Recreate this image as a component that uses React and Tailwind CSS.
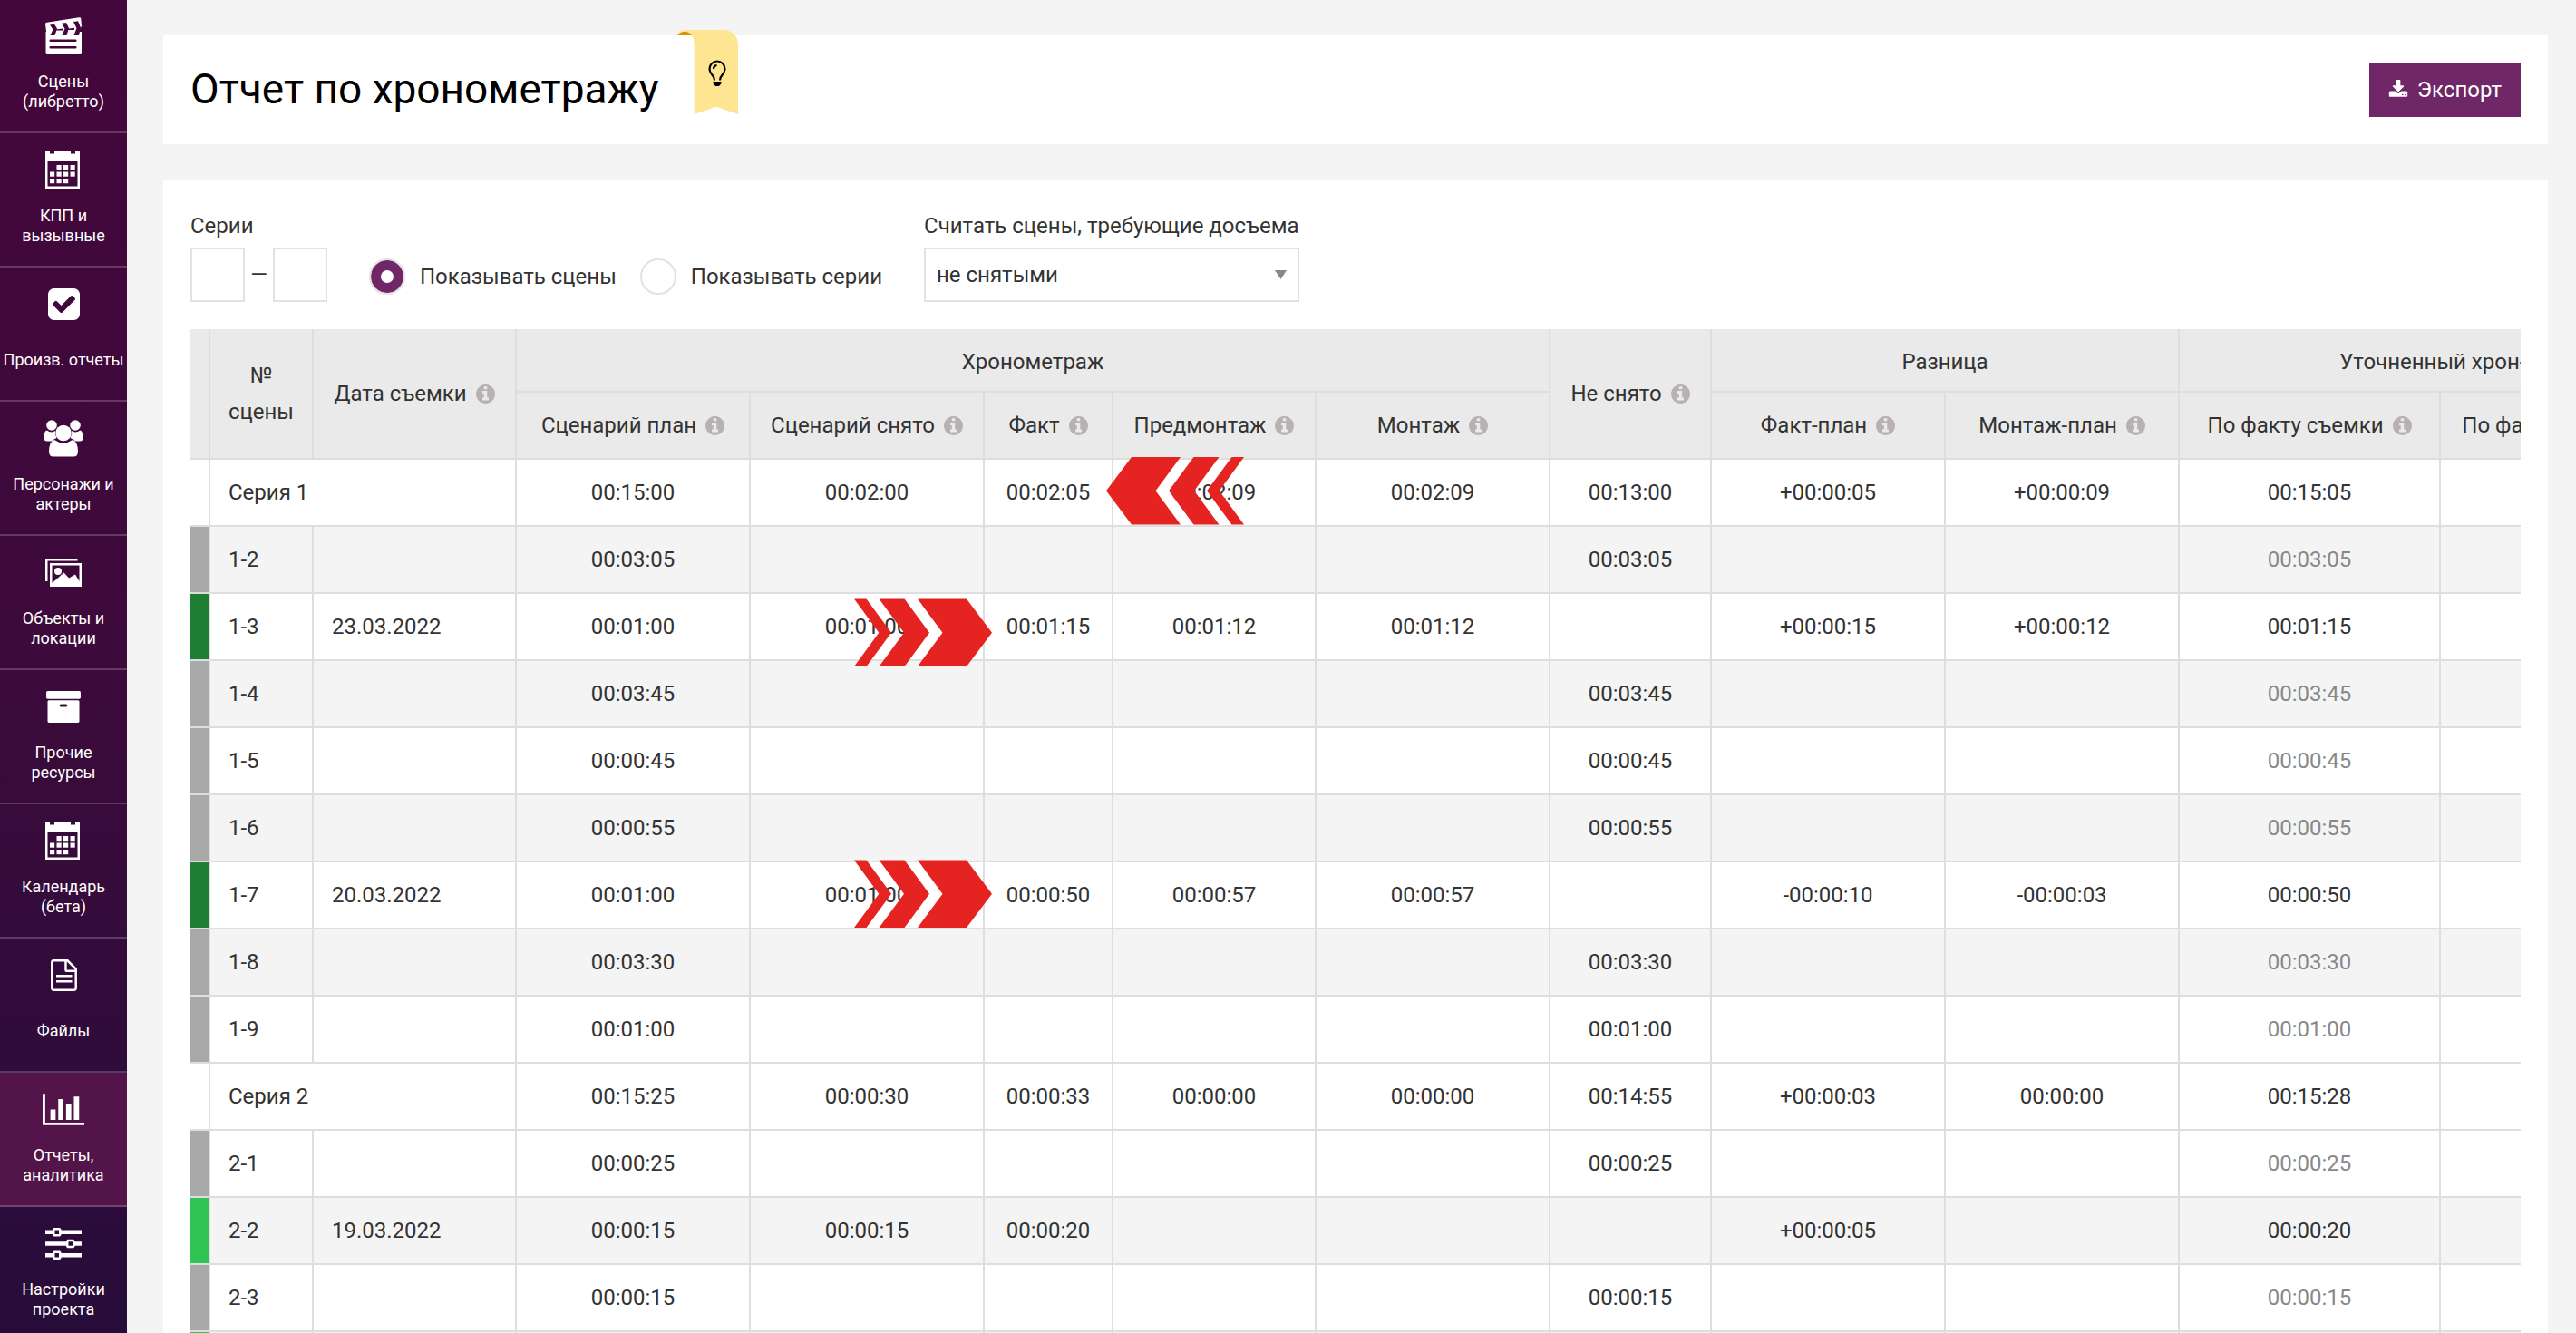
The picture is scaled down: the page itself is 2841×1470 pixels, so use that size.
import React from "react";

const P = "text-white fill-current";

function Clapper() {
  return (
    <svg className={P} width="40" height="40" viewBox="0 0 40 40" aria-hidden="true">
      <path d="M0.500 16H40V38.500Q40 40 38.500 40H2Q0.500 40 0.500 38.500Z" />
      <path d="M0 7.500Q0 6 1.600 5.700L37 0.200Q39 0 39.300 1.600L40 10L37 14.500L38.500 20H3L1 15.500Z" />
      <g fill="#42063a">
        <path d="M5 8.500L10 7.800L13 12.500L10.500 20H5.500L8.500 13.500Z" />
        <path d="M18 6.800L23 6L26 12L23.500 20H18.500L21.500 12.500Z" />
        <path d="M31 5L36 4.300L39 11.500L37 20H31.500L34.500 12Z" />
        <path d="M11 13.500L19 12.600V14.500H11ZM24 12.800L32 11.800V14H24Z" />
        <rect x="4.500" y="24.500" width="30" height="2.600" rx="1" />
        <rect x="4.500" y="32" width="30" height="2.600" rx="1" />
      </g>
    </svg>
  );
}

function Calendar() {
  const cells = [[12.500, 15], [20, 15], [27.500, 15], [5, 22.500], [12.500, 22.500], [20, 22.500], [27.500, 22.500], [5, 30], [12.500, 30], [20, 30]];
  return (
    <svg className={P} width="40" height="41" viewBox="0 0 40 41" aria-hidden="true">
      <path fillRule="evenodd" d="M0 0H5V2.500H10V0H28V2.500H33V0H38V41H0ZM2.500 10.500V38.500H35.500V10.500Z" />
      {cells.map(([x, y]) => (
        <rect key={x + "-" + y} x={x} y={y} width="5.200" height="5.200" />
      ))}
    </svg>
  );
}

function CheckSquare() {
  return (
    <svg className={P} width="35" height="35" viewBox="128 128 1536 1536" aria-hidden="true">
      <path d="M813 1299l614-614q19-19 19-45t-19-45l-102-102q-19-19-45-19t-45 19l-467 467-211-211q-19-19-45-19t-45 19l-102 102q-19 19-19 45t19 45l358 358q19 19 45 19t45-19zm851-883v960q0 119-84.500 203.500t-203.500 84.500h-960q-119 0-203.500-84.500t-84.500-203.500v-960q0-119 84.500-203.500t203.500-84.500h960q119 0 203.500 84.500t84.500 203.500z" />
    </svg>
  );
}

function People() {
  return (
    <svg className={P} width="44" height="41" viewBox="0 0 44 41" aria-hidden="true">
      <circle cx="9" cy="6" r="5.800" />
      <circle cx="35" cy="6" r="5.800" />
      <path d="M3.500 11.500Q9 15 13 12Q12 16 14.500 20Q10 22 9 23.500H4Q0.300 23.500 0.300 19Q0.300 13 3.500 11.500Z" />
      <path d="M40.500 11.500Q35 15 31 12Q32 16 29.500 20Q34 22 35 23.500H40Q43.700 23.500 43.700 19Q43.700 13 40.500 11.500Z" />
      <circle cx="22" cy="14.500" r="8.800" />
      <path d="M12 22Q22 29 32 22Q38 24 38 35Q38 40.500 33 40.500H11Q6 40.500 6 35Q6 24 12 22Z" />
    </svg>
  );
}

function Images() {
  return (
    <svg className={P} width="40" height="31" viewBox="0 0 40 31" aria-hidden="true">
      <path d="M0 0H35.500V2.500H2.500V25H0Z" />
      <path fillRule="evenodd" d="M5 5H40V31H5ZM7.500 7.500V27L20.500 15.500L26 21.500L33 17.500L37.500 25V7.500Z" />
      <circle cx="14" cy="14" r="4" />
    </svg>
  );
}

function Archive() {
  return (
    <svg className={P} width="38" height="35" viewBox="64 128 1664 1536" aria-hidden="true">
      <path d="M1088 832q0-26-19-45t-45-19h-256q-26 0-45 19t-19 45 19 45 45 19h256q26 0 45-19t19-45zm576-192v960q0 26-19 45t-45 19h-1408q-26 0-45-19t-19-45v-960q0-26 19-45t45-19h1408q26 0 45 19t19 45zm64-448v256q0 26-19 45t-45 19h-1536q-26 0-45-19t-19-45v-256q0-26 19-45t45-19h1536q26 0 45 19t19 45z" />
    </svg>
  );
}

function FileText() {
  return (
    <svg className="text-white" width="29" height="35" viewBox="0 0 29 35" fill="none" stroke="currentColor" strokeWidth="2.500" aria-hidden="true">
      <path d="M3.500 1.300H18.500L27.700 10.500V31.500Q27.700 33.700 25.500 33.700H3.500Q1.300 33.700 1.300 31.500V3.500Q1.300 1.300 3.500 1.300Z" />
      <path d="M16.500 2V11.500Q16.500 12.800 18 12.800H27" />
      <path d="M6 18.200H23.500M6 24.200H23.500" />
    </svg>
  );
}

function BarChart() {
  return (
    <svg className={P} width="46" height="35" viewBox="0 128 2048 1536" aria-hidden="true">
      <path d="M640 896v512h-256v-512h256zm384-512v1024h-256v-1024h256zm1024 1152v128h-2048v-1536h128v1408h1920zm-640-896v768h-256v-768h256zm384-384v1152h-256v-1152h256z" />
    </svg>
  );
}

function Sliders() {
  return (
    <svg className={P} width="40" height="35" viewBox="0 0 40 35" aria-hidden="true">
      <path fillRule="evenodd" d="M0 2.500H8V1.500L9.500 0H16L17.500 1.500V2.500H40V7H17.500V8L16 9.500H9.500L8 8V7H0ZM10.500 2.500V7H15V2.500Z" />
      <path fillRule="evenodd" d="M0 15.200H23V14.200L24.500 12.700H31L32.500 14.200V15.200H40V19.700H32.500V20.700L31 22.200H24.500L23 20.700V19.700H0ZM25.500 15.200V19.700H30V15.200Z" />
      <path fillRule="evenodd" d="M0 28H8V27L9.500 25.500H16L17.500 27V28H40V32.500H17.500V33.500L16 35H9.500L8 33.500V32.500H0ZM10.500 28V32.500H15V28Z" />
    </svg>
  );
}

function Info() {
  return (
    <svg className="ml-2.5 inline-block shrink-0 fill-[#b8b1b2]" width="21" height="21" viewBox="128 128 1536 1536" aria-hidden="true">
      <path d="M1152 1376v-160q0-14-9-23t-23-9h-96v-512q0-14-9-23t-23-9h-320q-14 0-23 9t-9 23v160q0 14 9 23t23 9h96v320h-96q-14 0-23 9t-9 23v160q0 14 9 23t23 9h448q14 0 23-9t9-23zm-128-896v-160q0-14-9-23t-23-9h-192q-14 0-23 9t-9 23v160q0 14 9 23t23 9h192q14 0 23-9t9-23zm640 416q0 209-103 385.500t-279.500 279.500-385.500 103-385.500-103-279.500-279.500-103-385.500 103-385.500 279.500-279.500 385.500-103 385.500 103 279.500 279.500 103 385.500z" />
    </svg>
  );
}

function Download() {
  return (
    <svg className="fill-white" width="22" height="22" viewBox="0 0 1792 1792" aria-hidden="true">
      <path d="M1344 1344q0-26-19-45t-45-19-45 19-19 45 19 45 45 19 45-19 19-45zm256 0q0-26-19-45t-45-19-45 19-19 45 19 45 45 19 45-19 19-45zm128-224v320q0 40-28 68t-68 28h-1472q-40 0-68-28t-28-68v-320q0-40 28-68t68-28h465l135 136q58 56 136 56t136-56l136-136h464q40 0 68 28t28 68zm-325-569q17 41-14 70l-448 448q-18 19-45 19t-45-19l-448-448q-31-29-14-70 17-39 59-39h256v-448q0-26 19-45t45-19h256q26 0 45 19t19 45v448h256q42 0 59 39z" />
    </svg>
  );
}

function Arrow({ className }) {
  return (
    <svg className={className} width="152" height="75" viewBox="0 0 152 75" fill="#e52421" aria-hidden="true">
      <path d="M0 37.300L28 0H82L54.500 37.300L82 74.500H28Z" />
      <path d="M69 37.300L96.500 0H124.500L97 37.300L124.500 74.500H96.500Z" />
      <path d="M111 37.300L138.500 0H152L124.700 37.300L152 74.500H138.500Z" />
    </svg>
  );
}

function Ribbon() {
  return (
    <svg width="67" height="95" viewBox="0 0 67 95" aria-hidden="true">
      <path d="M0 6Q3 1.500 9 1.500Q15 1.500 16.500 6Z" fill="#d8940b" />
      <path d="M0 6Q2 0 9 0H51Q67 1 67 18V93L43 84.700L18.700 93V16Q18 3 9 1.700Q3 1.500 0 6Z" fill="#fee592" />
      <g fill="none" stroke="#000" strokeWidth="2.200">
        <path d="M41 55.500Q41 52.500 38 49Q35.500 46 35.500 43A8.500 8.500 0 0 1 52.500 43Q52.500 46 50 49Q47 52.500 47 55.500" />
        <path d="M40 43Q40 39.500 43.500 39" />
      </g>
      <path d="M39.500 57H48.500V59L46 62H42L39.500 59Z" />
    </svg>
  );
}

const nav = [
  [["Сцены", "(либретто)"], Clapper],
  [["КПП и", "вызывные"], Calendar],
  [["Произв. отчеты"], CheckSquare],
  [["Персонажи и", "актеры"], People],
  [["Объекты и", "локации"], Images],
  [["Прочие", "ресурсы"], Archive],
  [["Календарь", "(бета)"], Calendar],
  [["Файлы"], FileText],
  [["Отчеты,", "аналитика"], BarChart],
  [["Настройки", "проекта"], Sliders],
];

const GRAY = "bg-[#a9a9a9]";
const GREEN = "bg-[#1e7e34]";
const LIME = "bg-[#30c552]";

// id, status bar, striped, date, script plan, script shot, fact, pre-edit, edit, left, fact-plan, edit-plan, refined, refined is an estimate
const rows = [
  ["Серия 1", null, false, null, "00:15:00", "00:02:00", "00:02:05", "00:02:09", "00:02:09", "00:13:00", "+00:00:05", "+00:00:09", "00:15:05", false],
  ["1-2", GRAY, true, "", "00:03:05", "", "", "", "", "00:03:05", "", "", "00:03:05", true],
  ["1-3", GREEN, false, "23.03.2022", "00:01:00", "00:01:00", "00:01:15", "00:01:12", "00:01:12", "", "+00:00:15", "+00:00:12", "00:01:15", false],
  ["1-4", GRAY, true, "", "00:03:45", "", "", "", "", "00:03:45", "", "", "00:03:45", true],
  ["1-5", GRAY, false, "", "00:00:45", "", "", "", "", "00:00:45", "", "", "00:00:45", true],
  ["1-6", GRAY, true, "", "00:00:55", "", "", "", "", "00:00:55", "", "", "00:00:55", true],
  ["1-7", GREEN, false, "20.03.2022", "00:01:00", "00:01:00", "00:00:50", "00:00:57", "00:00:57", "", "-00:00:10", "-00:00:03", "00:00:50", false],
  ["1-8", GRAY, true, "", "00:03:30", "", "", "", "", "00:03:30", "", "", "00:03:30", true],
  ["1-9", GRAY, false, "", "00:01:00", "", "", "", "", "00:01:00", "", "", "00:01:00", true],
  ["Серия 2", null, false, null, "00:15:25", "00:00:30", "00:00:33", "00:00:00", "00:00:00", "00:14:55", "+00:00:03", "00:00:00", "00:15:28", false],
  ["2-1", GRAY, false, "", "00:00:25", "", "", "", "", "00:00:25", "", "", "00:00:25", true],
  ["2-2", LIME, true, "19.03.2022", "00:00:15", "00:00:15", "00:00:20", "", "", "", "+00:00:05", "", "00:00:20", false],
  ["2-3", GRAY, false, "", "00:00:15", "", "", "", "", "00:00:15", "", "", "00:00:15", true],
  ["", LIME, true, "", "", "", "", "", "", "", "", "", "", false],
];

const TH = "border-r-2 border-b-2 border-[#dedede] p-0 text-center font-normal whitespace-nowrap";
const GROUP = "border-r-2 border-b-2 border-[#dedede] px-0 pt-1 pb-0 text-center font-normal whitespace-nowrap";
const TD = "border-r-2 border-b-2 border-[#dedede] p-0 text-center";
const RADIO =
  "h-10 w-10 appearance-none rounded-full border-2 border-[#e2e2e2] bg-white checked:shadow-[inset_0_0_0_11px_#702767]";

const arrows = {
  "1-3": "pointer-events-none absolute top-[5px] left-[114px] z-10 rotate-180",
  "1-7": "pointer-events-none absolute -top-[3px] left-[114px] z-10 rotate-180",
  "Серия 1": "pointer-events-none absolute -top-[3px] -left-2 z-10",
};
const arrowColumn = { "1-3": 1, "1-7": 1, "Серия 1": 3 };

function Head({ children, ...rest }) {
  return (
    <th className={TH} {...rest}>
      <span className="inline-flex items-center px-5">
        {children}
        <Info />
      </span>
    </th>
  );
}

function Row({ row }) {
  const [id, bar, striped, date, ...rest] = row;
  const estimate = rest[rest.length - 1];
  const values = rest.slice(0, -1);
  return (
    <tr className={striped ? "h-[74px] bg-[#f4f4f4]" : "h-[74px] bg-white"}>
      <td className={`border-r-2 border-b-2 border-[#dedede] bg-clip-padding p-0 ${bar || ""}`} />
      <td className="border-r-2 border-b-2 border-[#dedede] py-0 pr-0 pl-5 text-left whitespace-nowrap" colSpan={date === null ? 2 : 1}>
        {id}
      </td>
      {date !== null && <td className="border-r-2 border-b-2 border-[#dedede] py-0 pr-0 pl-5 text-left">{date}</td>}
      {values.map((v, i) => (
        <td key={i} className={`${TD} relative ${i === 8 && estimate ? "text-[#888888]" : ""}`}>
          {v}
          {arrowColumn[id] === i && <Arrow className={arrows[id]} />}
        </td>
      ))}
      <td className={TD} />
    </tr>
  );
}

export default function App() {
  return (
    <div className="flex h-screen overflow-hidden bg-[#f4f4f4] font-['Roboto',sans-serif] text-2xl text-[#333333]">
      <nav className="w-[140px] shrink-0 overflow-hidden bg-linear-to-b from-[#44063b] via-[#3c0a3b] to-[#270c3a]">
        <ul className="-mt-px">
          {nav.map(([lines, Icon], i) => (
            <li key={lines[0]}>
              <a
                href="#"
                className={`flex h-[148px] flex-col items-center border-b-2 border-white/20 pt-5 ${i === 8 ? "bg-[#531549]" : ""}`}
              >
                <span className="flex h-10 items-center justify-center">
                  <Icon />
                </span>
                <span className="mt-5 flex h-11 flex-col justify-center text-center text-lg leading-[22px] whitespace-nowrap text-white">
                  {lines.map((l) => (
                    <span key={l}>{l}</span>
                  ))}
                </span>
              </a>
            </li>
          ))}
        </ul>
      </nav>

      <main className="min-w-0 flex-1 overflow-x-hidden overflow-y-auto px-10 pt-[39px] pr-[31px] [scrollbar-width:none]">
        <header className="relative flex h-[120px] items-center justify-between bg-white px-[30px]">
          <div className="flex items-center">
            <h1 className="text-[46px] whitespace-nowrap text-black">Отчет по хронометражу</h1>
            <div className="relative ml-5 h-[120px] w-[67px]">
              <button type="button" aria-label="Подсказка" className="absolute -top-1.5 left-0">
                <Ribbon />
              </button>
            </div>
          </div>
          <button type="button" className="flex h-[60px] items-center gap-2.5 bg-[#702767] px-[21px] text-white">
            <Download />
            Экспорт
          </button>
        </header>

        <section className="mt-10 bg-white px-[30px] pt-[30px]">
          <form className="flex items-end">
            <fieldset>
              <legend className="h-11 leading-10">Серии</legend>
              <div className="flex items-center">
                <input aria-label="Серия с" className="h-[60px] w-[60px] border-2 border-[#e2e2e2] bg-white px-2" />
                <span className="w-[31px] text-center">—</span>
                <input aria-label="Серия по" className="h-[60px] w-[60px] border-2 border-[#e2e2e2] bg-white px-2" />
              </div>
            </fieldset>
            <label className="ml-[46px] flex h-14 items-center gap-4">
              <input type="radio" name="mode" defaultChecked className={RADIO} />
              Показывать сцены
            </label>
            <label className="ml-[26px] flex h-14 items-center gap-4">
              <input type="radio" name="mode" className={RADIO} />
              Показывать серии
            </label>
            <div className="relative ml-[46px] flex flex-col">
              <label htmlFor="reshoot" className="h-11 leading-10 whitespace-nowrap">
                Считать сцены, требующие досъема
              </label>
              <select id="reshoot" className="h-[60px] w-full appearance-none border-2 border-[#e2e2e2] bg-white px-3">
                <option>не снятыми</option>
              </select>
              <svg className="pointer-events-none absolute right-3.5 bottom-[25px] fill-[#888888]" width="13" height="10" viewBox="0 0 13 10" aria-hidden="true">
                <path d="M0 0H13L6.500 10Z" />
              </svg>
            </div>
          </form>

          <div className="mt-[30px] overflow-hidden">
            <table className="w-[2772px] table-fixed border-separate border-spacing-0">
              <colgroup>
                <col className="w-[22px]" />
                <col className="w-[114px]" />
                <col className="w-[224px]" />
                <col className="w-[258px]" />
                <col className="w-[258px]" />
                <col className="w-[142px]" />
                <col className="w-[224px]" />
                <col className="w-[258px]" />
                <col className="w-[178px]" />
                <col className="w-[258px]" />
                <col className="w-[258px]" />
                <col className="w-[288px]" />
                <col />
              </colgroup>
              <thead className="bg-[#eaeaea]">
                <tr className="h-[70px]">
                  <th className={TH} rowSpan={2} />
                  <th className={`${TH} leading-10`} rowSpan={2}>
                    №
                    <br />
                    сцены
                  </th>
                  <Head rowSpan={2}>Дата съемки</Head>
                  <th className={GROUP} colSpan={5}>Хронометраж</th>
                  <Head rowSpan={2}>Не снято</Head>
                  <th className={GROUP} colSpan={2}>Разница</th>
                  <th className={GROUP} colSpan={2}>Уточненный хрон-ж</th>
                </tr>
                <tr className="h-[74px]">
                  <Head>Сценарий план</Head>
                  <Head>Сценарий снято</Head>
                  <Head>Факт</Head>
                  <Head>Предмонтаж</Head>
                  <Head>Монтаж</Head>
                  <Head>Факт-план</Head>
                  <Head>Монтаж-план</Head>
                  <Head>По факту съемки</Head>
                  <Head>По факту монтажа</Head>
                </tr>
              </thead>
              <tbody>
                {rows.map((row) => (
                  <Row key={row[0]} row={row} />
                ))}
              </tbody>
            </table>
          </div>
        </section>
      </main>
    </div>
  );
}
